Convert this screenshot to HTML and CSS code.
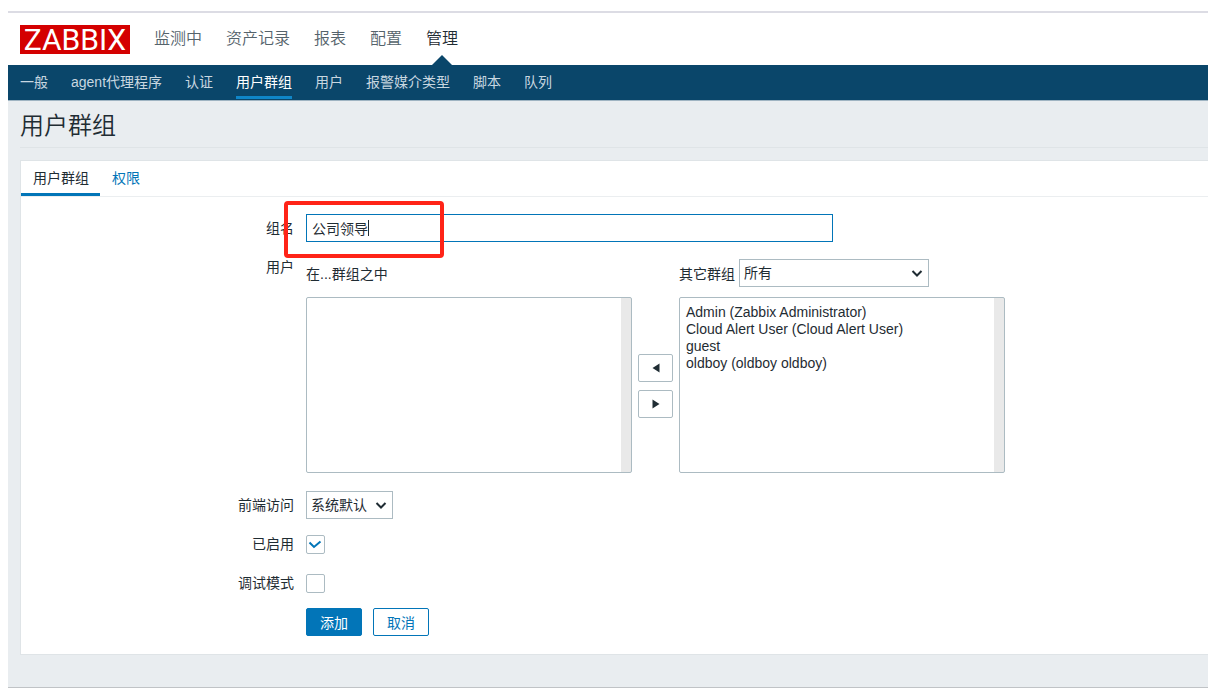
FILE: index.html
```html
<!DOCTYPE html>
<html lang="zh-CN">
<head>
<meta charset="utf-8">
<title>用户群组</title>
<link rel="stylesheet" href="styles.css">
</head>
<body>
<div class="page">
  <header class="top">
    <a class="logo" href="#">ZABBIX</a>
    <nav class="main-nav">
      <a href="#">监测中</a>
      <a href="#">资产记录</a>
      <a href="#">报表</a>
      <a href="#">配置</a>
      <a class="selected" href="#">管理</a>
    </nav>
  </header>
  <nav class="sub-nav">
    <a href="#">一般</a>
    <a href="#">agent代理程序</a>
    <a href="#">认证</a>
    <a class="selected" href="#">用户群组</a>
    <a href="#">用户</a>
    <a href="#">报警媒介类型</a>
    <a href="#">脚本</a>
    <a href="#">队列</a>
  </nav>
  <main class="content">
    <h1 class="title">用户群组</h1>
    <section class="panel">
      <div class="tabs">
        <a class="tab selected" href="#">用户群组</a>
        <a class="tab" href="#">权限</a>
      </div>
      <form class="form">
        <label class="label" for="name">组名</label>
        <div class="field name-field">
          <input class="text-input" id="name" type="text" value="公司领导">
          <span class="caret"></span>
          <span class="highlight"></span>
        </div>

        <label class="label users-label" for="members">用户</label>
        <div class="field users">
          <div class="users-column">
            <div class="users-head">在...群组之中</div>
            <select class="list" id="members" multiple></select>
          </div>
          <div class="arrows">
            <button class="arrow" type="button" aria-label="添加到群组">
              <svg width="8" height="10" viewBox="0 0 8 10"><path d="M7.5 0.5V9.5L0.5 5Z"/></svg>
            </button>
            <button class="arrow" type="button" aria-label="从群组移除">
              <svg width="8" height="10" viewBox="0 0 8 10"><path d="M0.5 0.5V9.5L7.5 5Z"/></svg>
            </button>
          </div>
          <div class="users-column">
            <div class="users-head">
              <label for="group">其它群组</label>
              <span class="select-wrap">
                <select class="select group-select" id="group"><option>所有</option></select>
                <svg class="chevron" width="12" height="8" viewBox="0 0 12 8"><path d="M1.5 1L6 5.5L10.5 1"/></svg>
              </span>
            </div>
            <select class="list" aria-label="其它群组用户" multiple>
              <option>Admin (Zabbix Administrator)</option>
              <option>Cloud Alert User (Cloud Alert User)</option>
              <option>guest</option>
              <option>oldboy (oldboy oldboy)</option>
            </select>
          </div>
        </div>

        <label class="label" for="access">前端访问</label>
        <div class="field">
          <span class="select-wrap">
            <select class="select access-select" id="access"><option>系统默认</option></select>
            <svg class="chevron" width="12" height="8" viewBox="0 0 12 8"><path d="M1.5 1L6 5.5L10.5 1"/></svg>
          </span>
        </div>

        <label class="label" for="enabled">已启用</label>
        <div class="field check-field">
          <input class="checkbox" id="enabled" type="checkbox" checked>
          <svg class="tick" width="14" height="10" viewBox="0 0 14 10"><path d="M1.5 2.5L6 7L12.5 1.5"/></svg>
        </div>

        <label class="label" for="debug">调试模式</label>
        <div class="field check-field">
          <input class="checkbox" id="debug" type="checkbox">
        </div>

        <div class="field actions">
          <button class="button primary" type="submit">添加</button>
          <button class="button" type="button">取消</button>
        </div>
      </form>
    </section>
  </main>
</div>
</body>
</html>
```

FILE: styles.css
```css
* {
  box-sizing: border-box;
}

body {
  margin: 11px 4px 8px 8px;
  background: #fff;
  color: #1f2c33;
  font-family: "Liberation Sans", "Noto Sans CJK SC", sans-serif;
  font-size: 14px;
}

a {
  text-decoration: none;
}

input,
select,
button {
  margin: 0;
  color: inherit;
  font: inherit;
}

.page {
  border-top: 2px solid #dcdce4;
  border-bottom: 1px solid #c0c3c6;
  background: #e9edf0;
}

.top {
  display: flex;
  align-items: center;
  gap: 24px;
  height: 52px;
  padding-left: 12px;
  background: #fff;
}

.logo {
  width: 110px;
  background: #d40000;
  color: #fff;
  font-family: Roboto, sans-serif;
  font-size: 30px;
  line-height: 29px;
  text-align: center;
}

.main-nav {
  display: flex;
  gap: 24px;
  font-size: 16px;
  font-weight: 350;
  line-height: 52px;
}

.main-nav a {
  position: relative;
  color: #55636b;
}

.main-nav .selected {
  color: #1f2c33;
}

.main-nav .selected::after {
  content: "";
  position: absolute;
  bottom: 0;
  left: 50%;
  margin-left: -10px;
  border: 10px solid transparent;
  border-top-width: 0;
  border-bottom-color: #0a466a;
}

.sub-nav {
  display: flex;
  gap: 23px;
  height: 36px;
  padding-left: 12px;
  border-bottom: 1px solid #9fb4c2;
  background: #0a466a;
  line-height: 34px;
}

.sub-nav a {
  height: 34px;
  border-bottom: 3px solid transparent;
  color: #c8d7e0;
}

.sub-nav .selected {
  border-bottom-color: #0f86c8;
  color: #fff;
}

.content {
  padding: 0 0 32px 12px;
}

.title {
  margin: 0 0 12px;
  padding: 7px 0 3px;
  border-bottom: 1px solid #dfe4e7;
  font-size: 24px;
  font-weight: 350;
  line-height: 36px;
}

.panel {
  border: 1px solid #dfe4e7;
  border-right: 0;
  background: #fff;
}

.tabs {
  display: flex;
  height: 36px;
  border-bottom: 1px solid #ebeef0;
  line-height: 34px;
}

.tab {
  height: 35px;
  padding: 0 11px 0 12px;
  border-bottom: 3px solid transparent;
  color: #0275b8;
}

.tab.selected {
  border-bottom-color: #0275b8;
  color: #1f2c33;
}

.form {
  display: grid;
  grid-template-columns: 273px 1fr;
  gap: 11px 12px;
  padding: 17px 0 18px;
}

.label {
  line-height: 28px;
  text-align: right;
}

.field {
  display: flex;
}

.name-field {
  position: relative;
}

.text-input {
  width: 527px;
  height: 28px;
  padding: 0 5px;
  border: 1px solid #0275b8;
  border-radius: 0;
  outline: 0;
}

.caret {
  position: absolute;
  top: 6px;
  left: 62px;
  width: 1px;
  height: 16px;
  background: #1f2c33;
}

.highlight {
  position: absolute;
  top: -13px;
  left: -22px;
  width: 160px;
  height: 57px;
  border: 4px solid #ff2418;
  border-radius: 4px;
  pointer-events: none;
}

.users {
  gap: 6px;
  padding: 6px 0 7px;
}

.users-column {
  display: flex;
  flex-direction: column;
  gap: 10px;
  width: 326px;
}

.users-head {
  display: flex;
  align-items: center;
  gap: 4px;
  height: 28px;
}

.list {
  width: 100%;
  height: 176px;
  padding: 6px 4px;
  overflow: hidden;
  border: 1px solid #acbbc2;
  border-radius: 2px;
  background: linear-gradient(#e9e9e9, #e9e9e9) right / 10px 100% no-repeat #fff;
}

.list option {
  min-height: 17px;
  padding: 0 2px;
  line-height: 17px;
}

.arrows {
  display: flex;
  flex-direction: column;
  justify-content: center;
  gap: 8px;
  padding-top: 40px;
}

.arrow {
  display: grid;
  place-items: center;
  width: 35px;
  height: 28px;
  padding: 0;
  border: 1px solid #acbbc2;
  border-radius: 2px;
  background: #fff;
}

.arrow path {
  fill: #1f2c33;
}

.select-wrap {
  display: flex;
  position: relative;
}

.select {
  height: 28px;
  padding: 0 4px;
  appearance: none;
  border: 1px solid #acbbc2;
  border-radius: 0;
  background: #fff;
}

.group-select {
  width: 190px;
}

.access-select {
  width: 87px;
}

.chevron {
  position: absolute;
  top: 11px;
  right: 6px;
  pointer-events: none;
}

.chevron path {
  fill: none;
  stroke: #1f2c33;
  stroke-width: 2;
}

.check-field {
  position: relative;
  align-items: center;
  height: 28px;
}

.checkbox {
  width: 19px;
  height: 19px;
  appearance: none;
  border: 1px solid #acbbc2;
  border-radius: 2px;
  background: #fff;
}

.tick {
  position: absolute;
  top: 10px;
  left: 2px;
  visibility: hidden;
  pointer-events: none;
}

.checkbox:checked + .tick {
  visibility: visible;
}

.tick path {
  fill: none;
  stroke: #0275b8;
  stroke-width: 2;
}

.actions {
  grid-column: 2;
  gap: 11px;
}

.button {
  width: 56px;
  height: 28px;
  padding: 0;
  border: 1px solid #0275b8;
  border-radius: 2px;
  background: #fff;
  color: #0275b8;
}

.button.primary {
  background: #0275b8;
  color: #fff;
}
```
